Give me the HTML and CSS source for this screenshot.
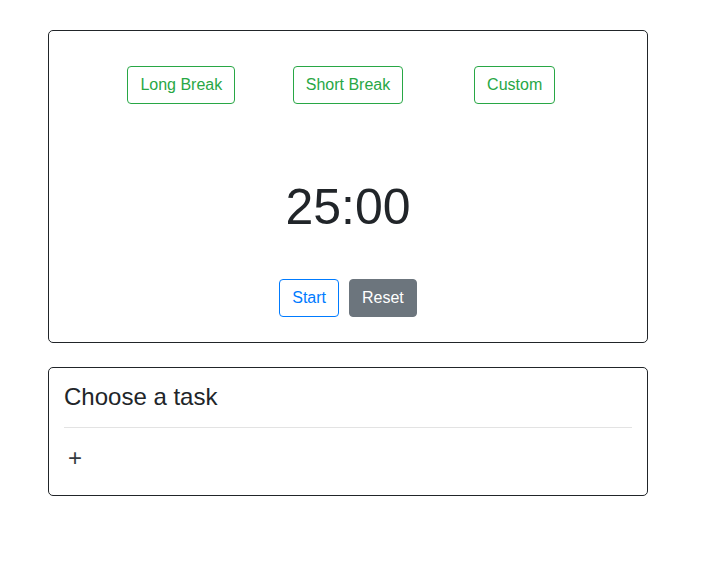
FILE: index.html
```html
<!DOCTYPE html>
<html lang="en">
<head>
<meta charset="utf-8">
<title>Pomodoro</title>
<link rel="stylesheet" href="styles.css">
</head>
<body>
<main class="page">
  <section class="card timer-card">
    <div class="modes">
      <div class="mode-cell"><button class="btn btn-outline-success">Long Break</button></div>
      <div class="mode-cell"><button class="btn btn-outline-success">Short Break</button></div>
      <div class="mode-cell"><button class="btn btn-outline-success">Custom</button></div>
    </div>
    <div class="timer">25:00</div>
    <div class="controls">
      <button class="btn btn-outline-primary">Start</button>
      <button class="btn btn-secondary">Reset</button>
    </div>
  </section>
  <section class="card task-card">
    <h4 class="task-title">Choose a task</h4>
    <hr class="divider">
    <button class="add-btn">+</button>
  </section>
</main>
</body>
</html>
```

FILE: styles.css
```css
html, body {
  margin: 0;
  padding: 0;
  background: #fff;
}
body {
  font-family: "Liberation Sans", Arial, sans-serif;
  color: #212529;
  font-size: 16px;
  line-height: 1.5;
}
.page {
  width: 600px;
  padding: 30px 0 0 48px;
}
.card {
  border: 1px solid #212529;
  border-radius: 5px;
  box-sizing: border-box;
}
.timer-card {
  padding: 35px 0 25px;
}
.modes {
  width: 500px;
  margin: 0 auto;
  display: grid;
  grid-template-columns: 1fr 1fr 1fr;
  justify-items: center;
}
.btn {
  font-family: inherit;
  font-size: 16px;
  line-height: 24px;
  padding: 6px 12px;
  border-radius: 4px;
  border: 1px solid transparent;
  background: transparent;
  cursor: pointer;
}
.btn-outline-success {
  color: #28a745;
  border-color: #28a745;
}
.btn-outline-primary {
  color: #007bff;
  border-color: #007bff;
}
.btn-secondary {
  color: #fff;
  background: #6c757d;
  border-color: #6c757d;
}
.timer {
  margin-top: 73px;
  text-align: center;
  font-size: 50px;
  line-height: 60px;
  font-weight: 300;
}
.controls {
  margin-top: 42px;
  display: flex;
  justify-content: center;
  gap: 10px;
}
.task-card {
  margin-top: 24px;
  padding: 15px 15px 19px;
}
.task-title {
  margin: 0 0 15px;
  font-size: 24px;
  font-weight: 500;
  line-height: 1.2;
}
.divider {
  margin: 0;
  border: 0;
  border-top: 1px solid #e3e3e3;
}
.add-btn {
  display: block;
  margin-top: 12px;
  padding: 0 4px;
  border: 0;
  background: transparent;
  font-family: inherit;
  font-size: 24px;
  line-height: 36px;
  color: #343a40;
}
```
